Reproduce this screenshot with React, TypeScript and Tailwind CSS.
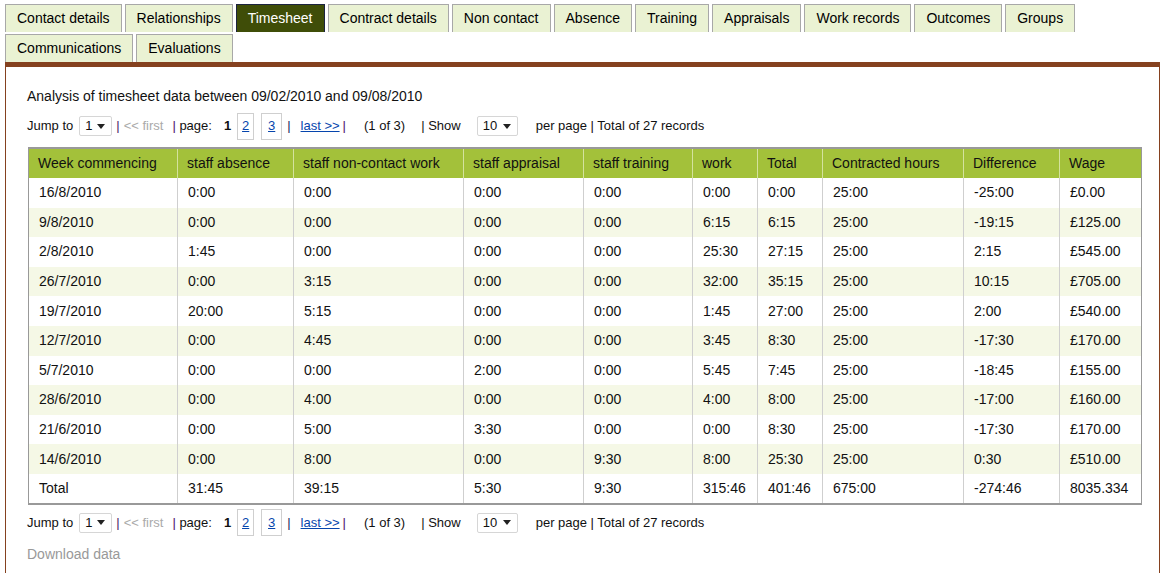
import React from "react";

const tabs1 = ["Contact details", "Relationships", "Timesheet", "Contract details", "Non contact", "Absence", "Training", "Appraisals", "Work records", "Outcomes", "Groups"];
const tabs2 = ["Communications", "Evaluations"];

const headers = ["Week commencing", "staff absence", "staff non-contact work", "staff appraisal", "staff training", "work", "Total", "Contracted hours", "Difference", "Wage"];
const widths = [149, 116, 170, 120, 109, 65, 65, 141, 96, 82];

const rows = [
  ["16/8/2010", "0:00", "0:00", "0:00", "0:00", "0:00", "0:00", "25:00", "-25:00", "£0.00"],
  ["9/8/2010", "0:00", "0:00", "0:00", "0:00", "6:15", "6:15", "25:00", "-19:15", "£125.00"],
  ["2/8/2010", "1:45", "0:00", "0:00", "0:00", "25:30", "27:15", "25:00", "2:15", "£545.00"],
  ["26/7/2010", "0:00", "3:15", "0:00", "0:00", "32:00", "35:15", "25:00", "10:15", "£705.00"],
  ["19/7/2010", "20:00", "5:15", "0:00", "0:00", "1:45", "27:00", "25:00", "2:00", "£540.00"],
  ["12/7/2010", "0:00", "4:45", "0:00", "0:00", "3:45", "8:30", "25:00", "-17:30", "£170.00"],
  ["5/7/2010", "0:00", "0:00", "2:00", "0:00", "5:45", "7:45", "25:00", "-18:45", "£155.00"],
  ["28/6/2010", "0:00", "4:00", "0:00", "0:00", "4:00", "8:00", "25:00", "-17:00", "£160.00"],
  ["21/6/2010", "0:00", "5:00", "3:30", "0:00", "0:00", "8:30", "25:00", "-17:30", "£170.00"],
  ["14/6/2010", "0:00", "8:00", "0:00", "9:30", "8:00", "25:30", "25:00", "0:30", "£510.00"],
  ["Total", "31:45", "39:15", "5:30", "9:30", "315:46", "401:46", "675:00", "-274:46", "8035.334"],
];

function Tab({ label }: { label: string }) {
  const active = label === "Timesheet";
  return (
    <div
      className={
        "h-[28px] px-[11px] flex items-center text-[14px] border border-b-0 " +
        (active ? "bg-[#3f4d08] text-white border-[#1c2340]" : "bg-[#eaf2d3] text-black border-[#a8a8a8]")
      }
    >
      {label}
    </div>
  );
}

function Select({ value, w }: { value: string; w: string }) {
  return (
    <div className={"h-[20px] border border-[#d6d6d6] rounded-[2px] bg-white flex items-center justify-between pl-[5px] pr-[6px] " + w}>
      <span>{value}</span>
      <svg width="8" height="5" viewBox="0 0 8 5"><path d="M0 0h8L4 5z" fill="#222" /></svg>
    </div>
  );
}

function Pager() {
  return (
    <div className="flex items-center h-[28px] text-[13px] text-[#111]">
      <span>Jump to</span>
      <div className="ml-[6px]"><Select value="1" w="w-[33px]" /></div>
      <span className="ml-[4px] text-[#4a1468]">|</span>
      <span className="ml-[4px] text-[#aaa]">&lt;&lt; first</span>
      <span className="ml-[9px]"><span className="text-[#4a1468]">|</span> page:</span>
      <span className="ml-[12px] font-bold">1</span>
      <span className="ml-[6px] w-[17px] h-[27px] border border-[#cfcfcf] flex items-center justify-center text-[#0645ad] underline">2</span>
      <span className="ml-[7px] w-[21px] h-[27px] border border-[#cfcfcf] flex items-center justify-center text-[#0645ad] underline">3</span>
      <span className="ml-[5px] text-[#13225c]">|</span>
      <span className="ml-[10px] text-[#0645ad] underline">last &gt;&gt;</span>
      <span className="ml-[3px] text-[#4a1468]">|</span>
      <span className="ml-[18px]">(1 of 3)</span>
      <span className="ml-[16px]">| Show</span>
      <div className="ml-[16px]"><Select value="10" w="w-[41px]" /></div>
      <span className="ml-[18px]">per page | Total of 27 records</span>
    </div>
  );
}

export default function App() {
  return (
    <div className="w-[1165px] h-[573px] bg-white overflow-hidden" style={{ fontFamily: '"Liberation Sans", Arial, sans-serif' }}>
      <div className="pl-[5px] pt-[4px]">
        <div className="flex gap-[3px]">
          {tabs1.map((t) => <Tab key={t} label={t} />)}
        </div>
        <div className="flex gap-[3px] mt-[2px]">
          {tabs2.map((t) => <Tab key={t} label={t} />)}
        </div>
      </div>
      <div className="ml-[5px] w-[1155px] border-t-[5px] border-l border-r border-[#85411f] h-[600px] pl-[21px] pt-[21px]">
        <div className="text-[14px] text-[#111] leading-[17px]">Analysis of timesheet data between 09/02/2010 and 09/08/2010</div>
        <div className="mt-[7px]"><Pager /></div>
        <table className="mt-[7px] ml-[1px] border-collapse border-t-2 border-b-2 border-l border-r border-[#999] text-[14px] text-[#111]">
          <thead>
            <tr className="bg-[#a3c13a] h-[30px]">
              {headers.map((h, i) => (
                <th
                  key={h}
                  style={{ width: widths[i] }}
                  className={"text-left font-normal pl-[9px] " + (i > 0 ? "border-l border-[#d4e29e]" : "")}
                >
                  {h}
                </th>
              ))}
            </tr>
          </thead>
          <tbody>
            {rows.map((r, ri) => (
              <tr key={ri} className={"h-[29.6px] " + (ri % 2 === 1 && ri < 10 ? "bg-[#f5f8e6]" : "bg-white")}>
                {r.map((c, ci) => (
                  <td key={ci} className={"pl-[10px] " + (ci > 0 ? "border-l border-[#cfcfcf]" : "")}>
                    {c}
                  </td>
                ))}
              </tr>
            ))}
          </tbody>
        </table>
        <div className="mt-[4px]"><Pager /></div>
        <div className="mt-[7px] text-[14px] text-[#999]">Download data</div>
      </div>
    </div>
  );
}
